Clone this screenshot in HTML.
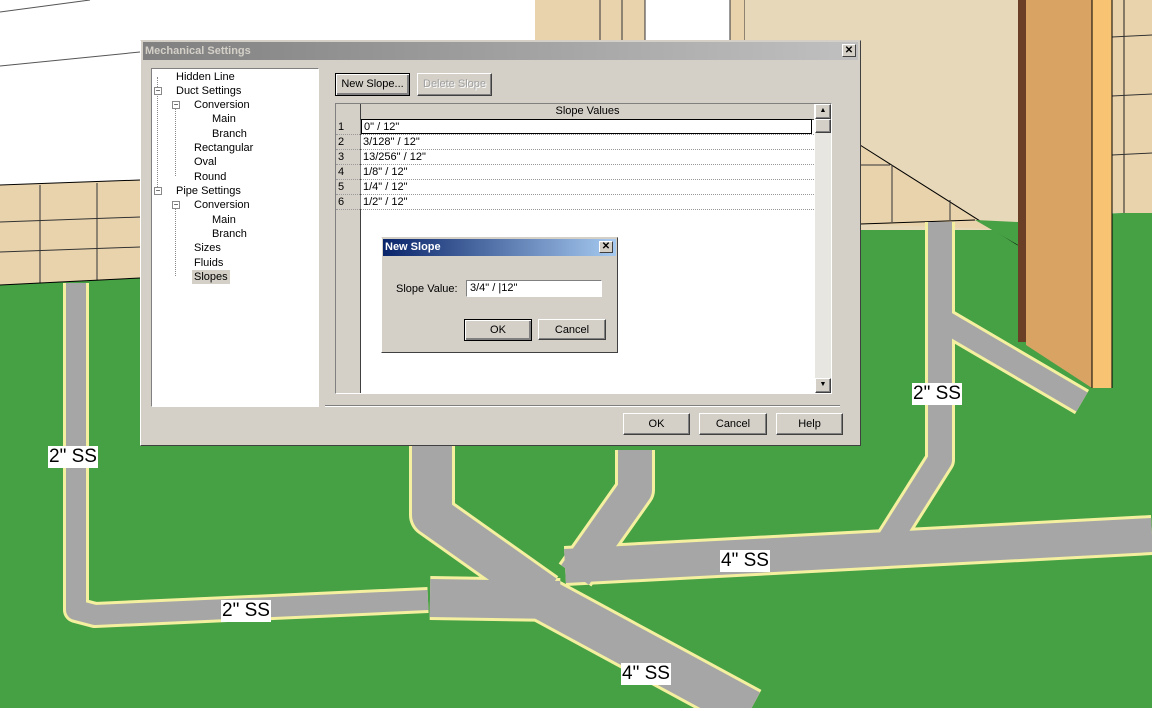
<!DOCTYPE html>
<html><head><meta charset="utf-8"><style>
*{margin:0;padding:0;box-sizing:border-box}
body{width:1152px;height:711px;overflow:hidden;position:relative;background:#fff;font-family:"Liberation Sans",Arial,sans-serif;font-size:11px;color:#000}
.abs{position:absolute}
.btn{position:absolute;background:#d4d0c8;border:1px solid;border-color:#fff #404040 #404040 #fff;box-shadow:inset -1px -1px #808080;text-align:center;font-size:11px;line-height:20px}
.tree div{position:absolute;font-size:11px;line-height:14px}
.row{position:absolute;left:0;width:478px;height:15px;border-bottom:1px dotted #999;font-size:11px;line-height:14px}
.row span{display:inline-block;width:25px;background:#d4d0c8;border-right:1px solid #808080;padding-left:2px;height:14px}
.row b{font-weight:normal;padding-left:2px}
.lbl{position:absolute;background:#fff;font-family:"Liberation Sans",Arial,sans-serif;font-size:19px;line-height:22px;padding:0 1px;color:#000}
</style></head><body>
<svg class="abs" style="left:0;top:0" width="1152" height="711">
<rect width="1152" height="711" fill="#fff"/>
<polygon points="0,285 140,278 860,222 1152,212 1152,708 0,708" fill="#46a044"/>
<polygon points="0,185 140,180 140,278 0,285" fill="#e9d3ac"/>
<line x1="0" y1="185" x2="140" y2="180" stroke="#000"/>
<line x1="0" y1="222" x2="140" y2="217" stroke="#333"/>
<line x1="0" y1="252" x2="140" y2="247" stroke="#333"/>
<line x1="40" y1="185" x2="40" y2="283" stroke="#333"/><line x1="97" y1="183" x2="97" y2="280" stroke="#333"/>
<line x1="0" y1="285" x2="140" y2="278" stroke="#000"/>
<line x1="0" y1="66" x2="140" y2="52" stroke="#555"/>
<line x1="0" y1="12" x2="90" y2="0" stroke="#555"/>
<rect x="535" y="0" width="210" height="42" fill="#e9d3ac"/>
<rect x="645" y="0" width="85" height="40" fill="#fff"/>
<line x1="600" y1="0" x2="600" y2="40" stroke="#333"/><line x1="622" y1="0" x2="622" y2="40" stroke="#333"/><line x1="645" y1="0" x2="645" y2="40" stroke="#333"/><line x1="730" y1="0" x2="730" y2="40" stroke="#333"/><line x1="745" y1="0" x2="745" y2="40" stroke="#333"/>
<rect x="745" y="0" width="273" height="230" fill="#e6d8b8"/>
<polygon points="860,145 1018,245 1018,230 860,224" fill="#e9d3ac"/>
<polygon points="860,145 975,218 860,224" fill="#e9d3ac"/>
<line x1="860" y1="145" x2="1018" y2="245" stroke="#000"/>
<line x1="860" y1="165" x2="890" y2="165" stroke="#333"/>
<line x1="892" y1="165" x2="892" y2="222" stroke="#333"/><line x1="950" y1="200" x2="950" y2="220" stroke="#333"/>
<line x1="860" y1="224" x2="975" y2="220" stroke="#000"/>
<polygon points="975,220 1018,245 1018,222" fill="#46a044"/>
<rect x="1112" y="0" width="40" height="213" fill="#e9d3ac"/>
<line x1="1124" y1="0" x2="1124" y2="213" stroke="#222"/>
<line x1="1112" y1="37" x2="1152" y2="35" stroke="#333"/><line x1="1112" y1="96" x2="1152" y2="94" stroke="#333"/><line x1="1112" y1="155" x2="1152" y2="153" stroke="#333"/>
<g fill="none" stroke-linecap="butt" stroke-linejoin="round">
<g stroke="#f4f0a0">
<polyline points="76,283 76,610 95,615 428,600" stroke-width="26"/>
<polyline points="940,222 940,460 880,555" stroke-width="30"/>
<line x1="942" y1="320" x2="1082" y2="402" stroke-width="28"/>
<polyline points="432,445 432,515 545,595" stroke-width="46"/>
<polyline points="635,450 635,490 575,575" stroke-width="40"/>
<line x1="565" y1="566" x2="1152" y2="535" stroke-width="40"/>
<line x1="545" y1="600" x2="750" y2="711" stroke-width="48"/>
<line x1="430" y1="598" x2="560" y2="600" stroke-width="44"/>
</g>
<g stroke="#a6a6a6">
<polyline points="76,283 76,610 95,615 428,600" stroke-width="20"/>
<polyline points="940,222 940,460 880,555" stroke-width="24"/>
<line x1="942" y1="320" x2="1082" y2="402" stroke-width="22"/>
<polyline points="432,445 432,515 545,595" stroke-width="40"/>
<polyline points="635,450 635,490 575,575" stroke-width="34"/>
<line x1="565" y1="566" x2="1152" y2="535" stroke-width="34"/>
<line x1="545" y1="600" x2="750" y2="711" stroke-width="42"/>
<line x1="430" y1="598" x2="560" y2="600" stroke-width="38"/>
</g>
</g>
<rect x="1018" y="0" width="8" height="342" fill="#6b3f25"/>
<polygon points="1026,0 1092,0 1092,388 1026,345" fill="#d9a463"/>
<rect x="1092" y="0" width="20" height="388" fill="#f9c374"/>
<line x1="1092" y1="0" x2="1092" y2="388" stroke="#000"/>
<line x1="1112" y1="0" x2="1112" y2="388" stroke="#000"/>
<rect x="0" y="708" width="1152" height="3" fill="#fff"/>
</svg>
<div class="lbl" style="left:48px;top:446px">2" SS</div>
<div class="lbl" style="left:221px;top:600px">2" SS</div>
<div class="lbl" style="left:720px;top:550px">4" SS</div>
<div class="lbl" style="left:621px;top:663px">4" SS</div>
<div class="lbl" style="left:912px;top:383px">2" SS</div>

<div class="abs" style="left:140px;top:40px;width:721px;height:406px;background:#d4d0c8;border:1px solid;border-color:#d4d0c8 #404040 #404040 #fff">
 <div class="abs" style="left:2px;top:1px;width:715px;height:18px;background:linear-gradient(90deg,#808080,#c0c0c0);color:#d4d0c8;font-weight:bold;font-size:11px;line-height:18px;padding-left:2px">Mechanical Settings</div>
 <div class="abs" style="left:701px;top:3px;width:14px;height:13px;background:#d4d0c8;border:1px solid;border-color:#fff #404040 #404040 #fff;font-size:10px;line-height:11px;text-align:center;font-weight:bold">✕</div>
 <div class="abs tree" style="left:10px;top:27px;width:168px;height:339px;background:#fff;border:1px solid;border-color:#808080 #fff #fff #808080">
  <div style="left:24px;top:1px">Hidden Line</div>
  <div style="left:24px;top:15px">Duct Settings</div>
  <div style="left:42px;top:29px">Conversion</div>
  <div style="left:60px;top:43px">Main</div>
  <div style="left:60px;top:58px">Branch</div>
  <div style="left:42px;top:72px">Rectangular</div>
  <div style="left:42px;top:86px">Oval</div>
  <div style="left:42px;top:101px">Round</div>
  <div style="left:24px;top:115px">Pipe Settings</div>
  <div style="left:42px;top:129px">Conversion</div>
  <div style="left:60px;top:144px">Main</div>
  <div style="left:60px;top:158px">Branch</div>
  <div style="left:42px;top:172px">Sizes</div>
  <div style="left:42px;top:187px">Fluids</div>
  <div style="left:40px;top:201px;background:#d4d0c8;padding:0 2px">Slopes</div>
  <div style="left:5px;top:8px;width:1px;height:118px;border-left:1px dotted #888"></div>
  <div style="left:23px;top:37px;width:1px;height:70px;border-left:1px dotted #888"></div>
  <div style="left:23px;top:137px;width:1px;height:70px;border-left:1px dotted #888"></div>
  <div style="left:2px;top:18px;width:8px;height:8px;border:1px solid #888;background:#fff;font-size:8px;line-height:6px;text-align:center">−</div>
  <div style="left:2px;top:118px;width:8px;height:8px;border:1px solid #888;background:#fff;font-size:8px;line-height:6px;text-align:center">−</div>
  <div style="left:20px;top:32px;width:8px;height:8px;border:1px solid #888;background:#fff;font-size:8px;line-height:6px;text-align:center">−</div>
  <div style="left:20px;top:132px;width:8px;height:8px;border:1px solid #888;background:#fff;font-size:8px;line-height:6px;text-align:center">−</div>
 </div>
 <div class="btn" style="left:194px;top:32px;width:75px;height:23px;border-color:#000;box-shadow:inset 1px 1px #fff,inset -2px -2px #808080">New Slope...</div>
 <div class="btn" style="left:276px;top:32px;width:75px;height:23px;color:#a0a0a0;text-shadow:1px 1px #fff">Delete Slope</div>
 <div class="abs" style="left:194px;top:62px;width:497px;height:291px;background:#fff;border:1px solid;border-color:#808080 #fff #fff #808080">
  <div class="abs" style="left:0;top:0;width:25px;height:289px;background:#d4d0c8;border-right:1px solid #404040"></div>
  <div class="abs" style="left:25px;top:0;width:453px;height:16px;background:#d4d0c8;border-bottom:1px solid #404040;text-align:center;line-height:15px">Slope Values</div>
  <div class="row" style="top:16px"><span>1</span><b style="display:inline-block;width:451px;border:1px solid #000;height:15px;margin-top:-1px">0" / 12"</b></div>
  <div class="row" style="top:31px"><span>2</span><b>3/128" / 12"</b></div>
  <div class="row" style="top:46px"><span>3</span><b>13/256" / 12"</b></div>
  <div class="row" style="top:61px"><span>4</span><b>1/8" / 12"</b></div>
  <div class="row" style="top:76px"><span>5</span><b>1/4" / 12"</b></div>
  <div class="row" style="top:91px"><span>6</span><b>1/2" / 12"</b></div>
  <div class="abs" style="left:479px;top:0;width:16px;height:289px;background:#e8e6e0"></div>
  <div class="btn" style="left:479px;top:0;width:16px;height:15px;font-size:7px;line-height:12px">▲</div>
  <div class="btn" style="left:479px;top:15px;width:16px;height:14px"></div>
  <div class="btn" style="left:479px;top:274px;width:16px;height:15px;font-size:7px;line-height:12px">▼</div>
 </div>
 <div class="abs" style="left:184px;top:364px;width:515px;height:2px;border-top:1px solid #808080;border-bottom:1px solid #fff"></div>
 <div class="btn" style="left:482px;top:372px;width:67px;height:22px">OK</div>
 <div class="btn" style="left:558px;top:372px;width:68px;height:22px">Cancel</div>
 <div class="btn" style="left:635px;top:372px;width:67px;height:22px">Help</div>
</div>

<div class="abs" style="left:381px;top:237px;width:237px;height:116px;background:#d4d0c8;border:1px solid;border-color:#d4d0c8 #404040 #404040 #fff">
 <div class="abs" style="left:1px;top:1px;width:233px;height:17px;background:linear-gradient(90deg,#0a246a,#a6caf0);color:#fff;font-weight:bold;font-size:11px;line-height:17px;padding-left:2px">New Slope</div>
 <div class="abs" style="left:217px;top:3px;width:14px;height:12px;background:#d4d0c8;border:1px solid;border-color:#fff #404040 #404040 #fff;font-size:10px;line-height:10px;text-align:center;font-weight:bold">✕</div>
 <div class="abs" style="left:14px;top:45px">Slope Value:</div>
 <div class="abs" style="left:84px;top:42px;width:136px;height:17px;background:#fff;border:1px solid;border-color:#808080 #fff #fff #808080;padding-left:3px;line-height:15px">3/4" / |12"</div>
 <div class="btn" style="left:82px;top:81px;width:68px;height:22px;border-color:#000;box-shadow:inset 1px 1px #fff,inset -2px -2px #808080">OK</div>
 <div class="btn" style="left:156px;top:81px;width:68px;height:21px">Cancel</div>
</div>
</body></html>
